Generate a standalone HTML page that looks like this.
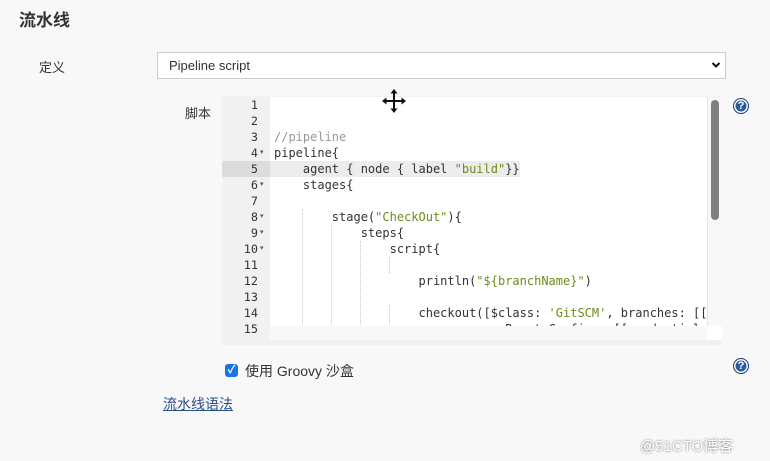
<!DOCTYPE html>
<html><head><meta charset="utf-8"><style>
body{margin:0;width:770px;height:461px;background:#f8f8f8;font-family:"Liberation Sans","Noto Sans CJK SC",sans-serif;position:relative;overflow:hidden;color:#333}
.abs{position:absolute}
.code{font-family:"DejaVu Sans Mono","Liberation Mono",monospace;font-size:12px;line-height:16px;white-space:pre;color:#333}
.ln{position:absolute;left:0;width:36px;text-align:right;font-family:"DejaVu Sans Mono",monospace;font-size:11.8px;line-height:16px;color:#333}
.s{color:#6a8e1a}.c{color:#999}
.g{position:absolute;width:0;border-left:1px dotted #ccc}
.help{position:absolute;width:14px;height:14px;border-radius:50%;background:#2a5aa0;border:1px solid #1d3f78;color:#fff;font:bold 11px/14px "Liberation Sans",sans-serif;text-align:center;box-shadow:inset 0 0 0 1.5px #fff}
</style></head><body>
<div class="abs" style="left:19px;top:6px;font-size:17px;font-weight:bold;color:#333">流水线</div>
<div class="abs" style="left:39px;top:57px;font-size:13px">定义</div>
<div class="abs" style="left:157px;top:52px;width:569px;height:27px;background:#fff;border:1px solid #ccc;box-sizing:border-box;font-size:13px;line-height:25px;padding-left:11px">Pipeline script
<svg class="abs" style="right:4px;top:8px" width="10" height="8" viewBox="0 0 10 8"><path d="M1.5 2 L5 5.5 L8.5 2" fill="none" stroke="#111" stroke-width="2"/></svg></div>
<div class="abs" style="left:185px;top:103px;font-size:13px">脚本</div>
<div class="abs" style="left:222px;top:96px;width:500px;height:249px;background:#f1f1f1;border-radius:2px"></div>
<div class="abs" style="left:270px;top:97px;width:437px;height:229px;background:#fff;overflow:hidden">
 <div class="abs" style="left:0;top:64px;width:250px;height:16px;background:#ececec"></div>
 <div class="g" style="left:32px;top:112px;height:120px"></div>
 <div class="g" style="left:61px;top:128px;height:104px"></div>
 <div class="g" style="left:90px;top:144px;height:88px"></div>
 <div class="g" style="left:119px;top:160px;height:16px"></div>
 <div class="g" style="left:119px;top:208px;height:24px"></div>
 <div class="code abs" style="left:4px;top:0">

<span class="c">//pipeline</span>
pipeline{
    agent { node { label <span class="s">"build"</span>}}
    stages{

        stage(<span class="s">"CheckOut"</span>){
            steps{
                script{

                    println(<span class="s">"${branchName}"</span>)

                    checkout([$class: <span class="s">'GitSCM'</span>, branches: [[
                            userRemoteConfigs: [[credentialsId
</div>
</div>
<div class="abs" style="left:222px;top:97px;width:48px;height:236px;background:#f1f1f1;overflow:hidden">
 <div class="abs" style="left:0;top:64px;width:48px;height:16px;background:#dcdcdc"></div>
 <div class="ln" style="top:0">1<br>2<br>3<br>4<br>5<br>6<br>7<br>8<br>9<br>10<br>11<br>12<br>13<br>14<br>15<br>16</div>
 <div class="abs" style="left:38px;top:0;font-size:7px;line-height:16px;color:#555">&nbsp;<br>&nbsp;<br>&nbsp;<br>▾<br>&nbsp;<br>▾<br>&nbsp;<br>▾<br>▾<br>▾</div>
</div>
<div class="abs" style="left:270px;top:326px;width:437px;height:14px;background:#f8f8f8"></div>
<div class="abs" style="left:707px;top:97px;width:14px;height:229px;background:#f8f8f8;border-left:1px solid #e4e4e4"></div>
<div class="abs" style="left:711px;top:100px;width:8px;height:120px;background:#7f7f7f;border-radius:4px"></div>
<div class="abs" style="left:707px;top:326px;width:15px;height:14px;background:#fff"></div>
<svg class="abs" style="left:381px;top:88px" width="26" height="26" viewBox="0 0 26 26"><path d="M13 2 V24 M2 13 H24" stroke="#111" stroke-width="2"/><path d="M13 1 L9.5 5.5 H16.5Z M13 25 L9.5 20.5 H16.5Z M1 13 L5.5 9.5 V16.5Z M25 13 L20.5 9.5 V16.5Z" fill="#111"/></svg>
<div class="help" style="left:733px;top:98px">?</div>
<div class="help" style="left:733px;top:358px">?</div>
<div class="abs" style="left:225px;top:364px;width:13px;height:13px;background:#1a73e8;border-radius:3px;color:#fff;font-size:11px;line-height:13px;text-align:center;font-weight:bold">✓</div>
<div class="abs" style="left:245px;top:361px;font-size:14px">使用 Groovy 沙盒</div>
<div class="abs" style="left:163px;top:394px;font-size:14px;color:#2a4e8a;text-decoration:underline">流水线语法</div>
<div class="abs" style="left:640px;top:435px;font-size:15px;color:#fff;text-shadow:0 0 2px #666">@51CTO博客</div>
</body></html>
